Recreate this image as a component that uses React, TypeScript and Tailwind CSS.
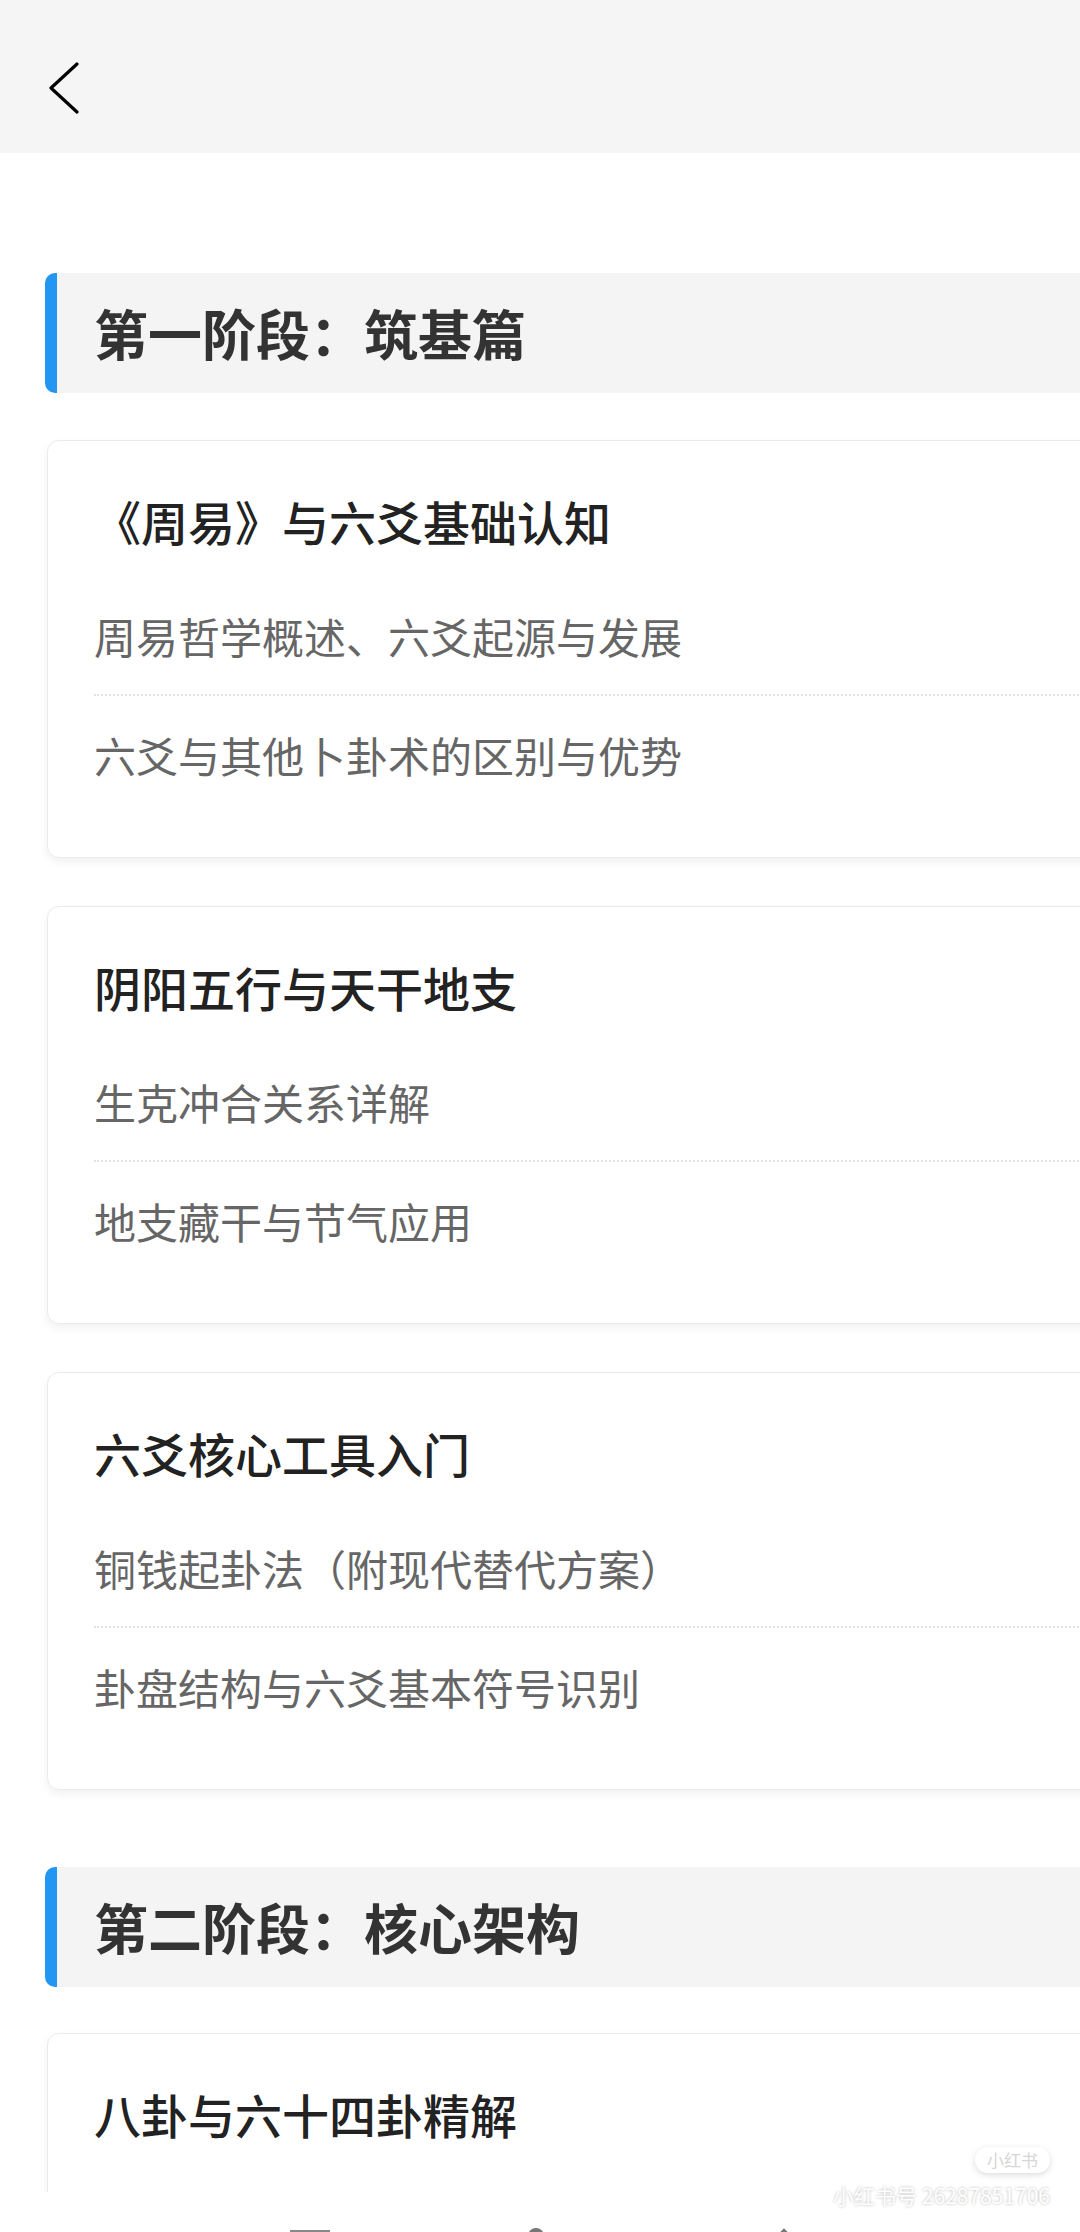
type Lesson = {
  title: string;
  items: string[];
};

const stageOne: Lesson[] = [
  {
    title: "《周易》与六爻基础认知",
    items: ["周易哲学概述、六爻起源与发展", "六爻与其他卜卦术的区别与优势"],
  },
  {
    title: "阴阳五行与天干地支",
    items: ["生克冲合关系详解", "地支藏干与节气应用"],
  },
  {
    title: "六爻核心工具入门",
    items: ["铜钱起卦法（附现代替代方案）", "卦盘结构与六爻基本符号识别"],
  },
];

// only the title of this one is on screen, the rest sits under the system bar
const stageTwo: Lesson[] = [
  {
    title: "八卦与六十四卦精解",
    items: [],
  },
];

function StageHeader({title}: {title: string}) {
  return (
    <div className="h-[120px] ml-[45px] w-[1100px] flex items-center bg-[#f4f4f4] border-l-[12px] border-[#2196f3] rounded-l-[10px] pl-[37px]">
      <h2 className="text-[54px] leading-none font-bold text-[#333]">{title}</h2>
    </div>
  );
}

function LessonCard({title, items}: Lesson) {
  return (
    <div className="ml-[47px] w-[1100px] bg-white border border-[#ebebeb] rounded-[12px] shadow-[0_4px_10px_rgba(0,0,0,0.06)] pt-[51px] pb-[43px] pl-[46px]">
      <h3 className="h-[56px] flex items-center text-[47px] leading-none font-medium text-[#222]">
        {title}
      </h3>
      {items.length > 0 && (
        <ul className="mt-[30px]">
          {items.map((item, index) => (
            <li
              key={index}
              className={
                index === 0
                  ? "h-[118px] flex items-center border-b-2 border-dotted border-[#e3e3e3] text-[42px] leading-none text-[#666]"
                  : "h-[118px] flex items-center text-[42px] leading-none text-[#666]"
              }
            >
              {item}
            </li>
          ))}
        </ul>
      )}
      {items.length === 0 && <div className="h-[200px]" />}
    </div>
  );
}

export default function App() {
  return (
    <div
      className="relative w-[1080px] h-[2232px] overflow-hidden bg-white"
      style={{fontFamily: '"Noto Sans CJK SC", "Noto Sans", sans-serif'}}
    >
      <header className="h-[153px] bg-[#f5f5f5] flex items-start pt-[62px] pl-[49px]">
        <svg width="30" height="52" viewBox="0 0 30 52" fill="none">
          <polyline
            points="28,2 2,26 28,50"
            stroke="#000"
            strokeWidth="3.2"
            strokeLinecap="round"
            strokeLinejoin="round"
          />
        </svg>
      </header>

      <main className="pt-[120px]">
        <StageHeader title="第一阶段：筑基篇" />
        <div className="mt-[47px] flex flex-col gap-[48px]">
          {stageOne.map((lesson, index) => (
            <LessonCard key={index} {...lesson} />
          ))}
        </div>

        <div className="mt-[77px]">
          <StageHeader title="第二阶段：核心架构" />
        </div>
        <div className="mt-[46px] flex flex-col gap-[48px]">
          {stageTwo.map((lesson, index) => (
            <LessonCard key={index} {...lesson} />
          ))}
        </div>
      </main>

      {/* bottom system bar, mostly cut off */}
      <div className="absolute left-0 right-0 bottom-0 h-[40px] bg-white">
        <div className="absolute bottom-0 left-[290px] w-[40px] h-[2px] bg-[#888]" />
        <div className="absolute bottom-[-12px] left-[528px] w-[16px] h-[16px] rounded-full bg-[#777]" />
        <div className="absolute bottom-[-6px] left-[780px] w-[8px] h-[8px] rotate-45 bg-[#777]" />
      </div>

      {/* watermark */}
      <div className="absolute right-[30px] bottom-[26px] flex flex-col items-end gap-[12px]">
        <span className="px-[12px] py-[2px] rounded-full bg-white shadow-[0_2px_6px_rgba(0,0,0,0.14)] text-[17px] leading-[22px] text-[#d6d6d6]">
          小红书
        </span>
        <span className="text-[21px] leading-none text-white [text-shadow:0_0_3px_rgba(0,0,0,0.3)]">
          小红书号 26287851706
        </span>
      </div>
    </div>
  );
}
